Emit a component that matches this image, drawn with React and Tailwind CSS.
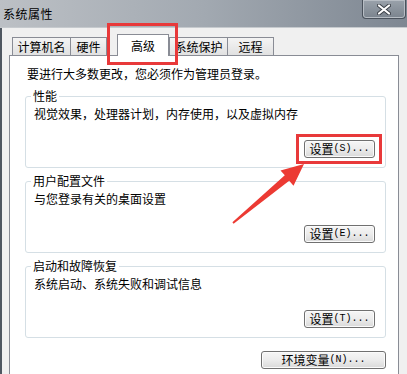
const Btn = ({ label, hot, className }) => (
  <button
    className={`${className} h-[18px] flex items-center justify-center rounded-[3px] border border-[#707070] bg-linear-to-b from-[#f6f6f6] via-[#ececec] to-[#d9d9d9] text-[12px] leading-none text-black shadow-[inset_0_0_0_1px_#fbfbfb]`}
  >
    <span>{label}</span>
    <span className="font-['Liberation_Mono',monospace] text-[10px]">({hot})...</span>
  </button>
)

const Group = ({ title, text, hot }) => (
  <fieldset className="rounded-[3px] border border-[#d5dfe5] pl-[5px] pr-[8px] pb-[9px]">
    <legend className="px-[2px] leading-[16px]">{title}</legend>
    <p className="mt-[2px] pl-[3px] leading-[16px]">{text}</p>
    <div className="mt-[18px] flex justify-end pr-[2px]">
      <Btn label="设置" hot={hot} className="w-[71px]" />
    </div>
  </fieldset>
)

const tabBase = "h-[18px] flex items-center justify-center border-t border-l border-r border-[#898c95] bg-linear-to-b from-[#f4f4f4] to-[#e1e1e1]"

export default function App() {
  return (
    <div className="relative w-[407px] h-[374px] overflow-hidden flex flex-col bg-[#f0f0f0] text-[12px] text-black font-['Noto_Sans_CJK_SC',sans-serif]">
      {/* title bar */}
      <div className="h-[28px] shrink-0 flex justify-between items-start bg-linear-to-r from-[#bcc0c5] via-[#a2a9b1] to-[#7e8792] border-b border-[#c6cace]">
        <span className="self-center pl-[3px] text-[12px] tracking-[0.5px]">系统属性</span>
        <div className="mr-[1px] w-[44px] h-[19px] rounded-b-[4px] border border-t-0 border-[#4a525c] bg-linear-to-b from-[#9aa2ab] to-[#7b848e] shadow-[inset_0_0_0_1px_#b7bdc4] flex items-center justify-center">
          <svg width="14" height="11" viewBox="0 0 14 11">
            <path d="M2 1.5 L12 9.5 M12 1.5 L2 9.5" stroke="#3b4048" strokeWidth="4" strokeLinecap="round" />
            <path d="M2 1.5 L12 9.5 M12 1.5 L2 9.5" stroke="#ffffff" strokeWidth="2.2" strokeLinecap="round" />
          </svg>
        </div>
      </div>

      {/* body */}
      <div className="flex-1 flex flex-col border-l-2 border-[#4f5761] pl-[7px] pr-[8px]">
        {/* tabs */}
        <div className="flex items-end pt-[6px] pl-[3px]">
          <div className={`${tabBase} w-[59px]`}>计算机名</div>
          <div className={`${tabBase} w-[37px] -ml-px`}>硬件</div>
          <div className="relative z-10 ml-[10px] -mb-px h-[22px] w-[52px] flex items-center justify-center border-t border-l border-r border-[#898c95] bg-white">
            高级
          </div>
          <div className={`${tabBase} w-[59px]`}>系统保护</div>
          <div className={`${tabBase} w-[47px] -ml-px`}>远程</div>
        </div>

        {/* panel */}
        <div className="flex-1 flex flex-col border-t border-l border-r border-[#898c95] bg-white pt-[10px] pl-[15px] pr-[12px]">
          <p className="leading-[16px] pl-[2px]">要进行大多数更改，您必须作为管理员登录。</p>
          <div className="mt-[6px] flex flex-col gap-[5px]">
            <Group title="性能" text="视觉效果，处理器计划，内存使用，以及虚拟内存" hot="S" />
            <Group title="用户配置文件" text="与您登录有关的桌面设置" hot="E" />
            <Group title="启动和故障恢复" text="系统启动、系统失败和调试信息" hot="T" />
          </div>
          <div className="mt-[13px] flex justify-end">
            <Btn label="环境变量" hot="N" className="w-[125px]" />
          </div>
        </div>
      </div>

      {/* annotations */}
      <div className="absolute left-[107px] top-[23px] w-[71px] h-[42px] border-[3px] border-[#e8393a]" />
      <div className="absolute left-[296px] top-[134px] w-[86px] h-[30px] border-[3px] border-[#e8393a]" />
      <svg className="absolute inset-0 pointer-events-none" width="407" height="374">
        <polygon
          points="304,164 280.5,170.5 284.8,175.3 232.4,222.2 233.6,223.8 289.2,180.7 293.5,185.7"
          fill="#ec3a33"
        />
      </svg>
    </div>
  )
}
